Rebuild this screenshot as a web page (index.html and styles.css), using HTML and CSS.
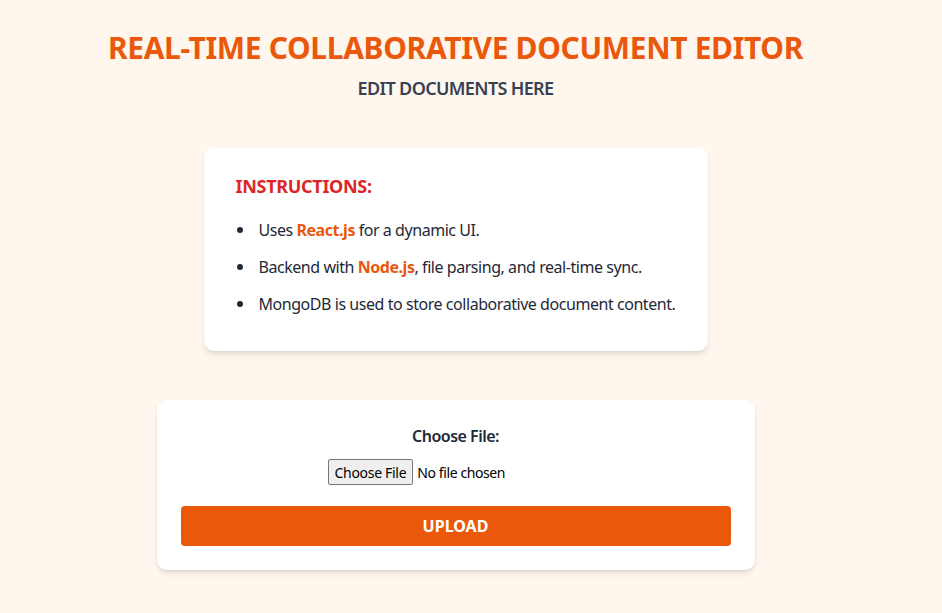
FILE: index.html
```html
<!DOCTYPE html>
<html lang="en">

<head>
  <meta charset="utf-8">
  <meta name="viewport" content="width=device-width, initial-scale=1.0">
  <title>Real-Time Collaborative Document Editor</title>
  <link rel="stylesheet" href="styles.css">
</head>

<body>
  <div class="page">
    <h1 class="title">REAL-TIME COLLABORATIVE DOCUMENT EDITOR</h1>
    <h2 class="subtitle">EDIT DOCUMENTS HERE</h2>

    <div class="card instructions">
      <h3>INSTRUCTIONS:</h3>
      <ul>
        <li>Uses <span class="tech">React.js</span> for a dynamic UI.</li>
        <li>Backend with <span class="tech">Node.js</span>, file parsing, and real-time sync.</li>
        <li>MongoDB is used to store collaborative document content.</li>
      </ul>
    </div>

    <form class="card upload" name="uploadForm">
      <label for="file">Choose File:</label>
      <div class="file-row">
        <input type="file" id="file" name="file">
      </div>
      <button type="button" name="button">Upload</button>
    </form>
  </div>
</body>

</html>
```

FILE: styles.css
```css
* {
  box-sizing: border-box;
}

body {
  margin: 0;
  background: #fff7ed;
  font-family: "Noto Sans", "Open Sans", Arial, sans-serif;
  font-size: 16px;
  color: #1f2937;
}

.page {
  width: 911px;
  padding-top: 30px;
  padding-bottom: 40px;
}

.title {
  margin: 0;
  text-align: center;
  font-size: 30px;
  line-height: 36px;
  font-weight: 700;
  letter-spacing: -0.35px;
  color: #ea580c;
}

.subtitle {
  margin: 8px 0 0;
  text-align: center;
  font-size: 18px;
  line-height: 28px;
  font-weight: 600;
  letter-spacing: -0.65px;
  color: #374151;
}

.card {
  background: #fff;
  border-radius: 10px;
  box-shadow: 0 4px 6px -1px rgba(0, 0, 0, 0.1), 0 2px 4px -2px rgba(0, 0, 0, 0.1);
}

.instructions {
  width: 504px;
  margin: 46px auto 0;
  padding: 24px 20px 35px 32px;
}

.instructions h3 {
  margin: 0;
  font-size: 18px;
  line-height: 28px;
  font-weight: 700;
  letter-spacing: -0.3px;
  color: #dc2626;
}

.instructions ul {
  margin: 18px 0 0;
  padding: 0;
  list-style: none;
}

.instructions li {
  position: relative;
  padding-left: 23px;
  line-height: 24px;
  margin-bottom: 13px;
  letter-spacing: -0.45px;
  white-space: nowrap;
}

.instructions li:before {
  content: "";
  position: absolute;
  left: 1px;
  top: 9px;
  width: 6px;
  height: 6px;
  border-radius: 50%;
  background: #1f2937;
}

.instructions li:last-child {
  margin-bottom: 0;
}

.tech {
  color: #ea580c;
  font-weight: 700;
}

.upload {
  width: 598px;
  margin: 49px auto 0;
  padding: 24px;
  display: flex;
  flex-direction: column;
}

.upload label {
  text-align: center;
  font-weight: 600;
  line-height: 24px;
  letter-spacing: -0.5px;
}

.file-row {
  display: flex;
  justify-content: center;
  margin-top: 11px;
}

.file-row input {
  width: 256px;
  font-family: inherit;
  font-size: 14px;
  letter-spacing: -0.4px;
  color: #000;
}

.file-row input::file-selector-button {
  height: 26px;
  padding: 0 6px;
  margin-right: 4px;
  font-family: inherit;
  font-size: 14px;
  letter-spacing: -0.3px;
  background: #efefef;
  border: 1px solid #767676;
  border-radius: 2px;
}

.upload button {
  margin-top: 21px;
  height: 40px;
  border: none;
  border-radius: 4px;
  background: #ea580c;
  color: #fff;
  font-family: inherit;
  font-size: 16px;
  font-weight: 700;
  text-transform: uppercase;
}
```
